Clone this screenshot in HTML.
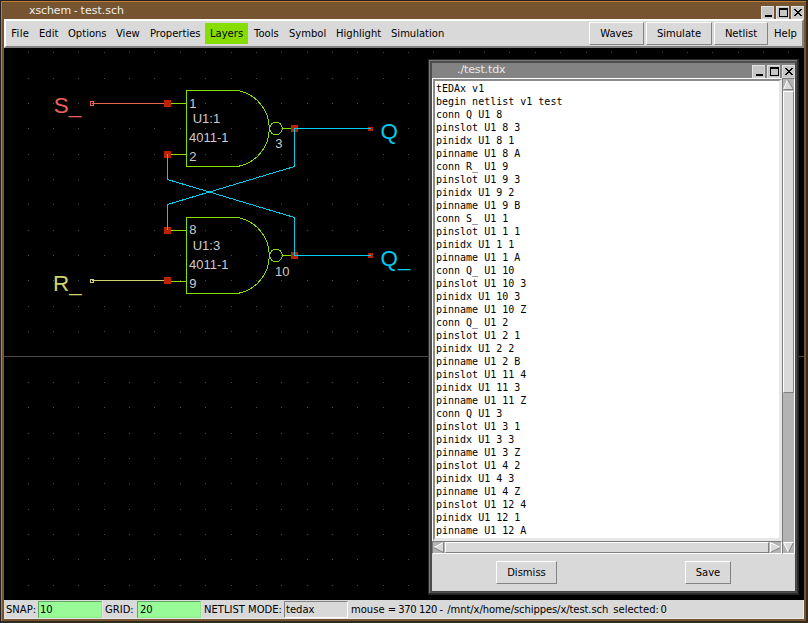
<!DOCTYPE html><html><head><meta charset="utf-8"><title>xschem - test.sch</title><style>
html,body{margin:0;padding:0}
body{width:808px;height:623px;position:relative;overflow:hidden;background:#765430;font-family:"DejaVu Sans","Liberation Sans",sans-serif;font-size:10px;color:#000}
div,span{position:absolute;box-sizing:border-box;white-space:pre}
.t{line-height:12px;height:12px}
.btn{background:#d9d9d9;border:1px solid;border-color:#fff #828282 #828282 #fff}
.wb{background:#c6c6c6;border:1px solid;border-color:#e2e2e2 #d4d4d4 #d4d4d4 #e2e2e2;width:13px;height:13px}
.mono{font-family:"DejaVu Sans Mono","Liberation Mono",monospace;font-size:10px}
</style></head><body>
<div style="left:0;top:0;width:808px;height:1px;background:#242220"></div>
<div style="left:0;top:0;width:1px;height:623px;background:#242220"></div>
<div style="left:1px;top:1px;width:805px;height:1px;background:#c07c32"></div>
<div style="left:1px;top:1px;width:1px;height:620px;background:#c07c32"></div>
<div style="left:806px;top:1px;width:2px;height:622px;background:#33291f"></div>
<div style="left:1px;top:621px;width:807px;height:2px;background:#33291f"></div>
<div class="t" style="left:29px;top:4px;color:#efefef;font-size:11px;line-height:13px;height:13px;letter-spacing:-0.1px">xschem </div>
<div class="t" style="left:73.8px;top:4px;color:#efefef;font-size:11px;line-height:13px;height:13px">- </div>
<div class="t" style="left:80.6px;top:4px;color:#efefef;font-size:11px;line-height:13px;height:13px">test.sch</div>
<div class="wb" style="left:761px;top:6px"><div style="left:3px;top:8px;width:7px;height:2px;background:#000"></div></div>
<div class="wb" style="left:776px;top:6px"><div style="left:2px;top:1px;width:9px;height:9px;border:1px solid #000;border-top-width:2px"></div></div>
<div class="wb" style="left:791px;top:6px"><svg width="11" height="11" style="position:absolute;left:0;top:0" shape-rendering="crispEdges"><path d="M2 2h2v1h1v1h2v-1h1v-1h2v1h-1v1h-1v1h-1v1h1v1h1v1h1v1h-2v-1h-1v-1h-2v1h-1v1h-2v-1h1v-1h1v-1h1v-1h-1v-1h-1v-1h-1z" fill="#000"/></svg></div>
<div style="left:4px;top:19px;width:800px;height:600px;background:#d9d9d9"></div>
<div style="left:4px;top:19px;width:800px;height:29px;background:#d9d9d9;border:2px solid;border-color:#fff #828282 #828282 #fff"></div>
<div style="left:205px;top:23px;width:43px;height:21px;background:#88dd00"></div>
<div class="t" style="left:11.3px;top:28px;letter-spacing:0.3px">File</div>
<div class="t" style="left:39px;top:28px">Edit</div>
<div class="t" style="left:68px;top:28px">Options</div>
<div class="t" style="left:116px;top:28px">View</div>
<div class="t" style="left:150px;top:28px">Properties</div>
<div class="t" style="left:210px;top:28px">Layers</div>
<div class="t" style="left:254px;top:28px">Tools</div>
<div class="t" style="left:289px;top:28px">Symbol</div>
<div class="t" style="left:336px;top:28px">Highlight</div>
<div class="t" style="left:391px;top:28px">Simulation</div>
<div class="btn" style="left:589px;top:22px;width:55px;height:23px;text-align:center;line-height:22px">Waves</div>
<div class="btn" style="left:646px;top:22px;width:66px;height:23px;text-align:center;line-height:22px">Simulate</div>
<div class="btn" style="left:714px;top:22px;width:54px;height:23px;text-align:center;line-height:22px">Netlist</div>
<div class="t" style="left:774px;top:28px">Help</div>
<div style="left:4px;top:48px;width:800px;height:552px;background:#000"></div>
<svg width="800" height="552" viewBox="4 48 800 552" style="position:absolute;left:4px;top:48px" shape-rendering="crispEdges"><path d="M28 52h1M28 78h1M28 103h1M28 128h1M28 154h1M28 179h1M28 204h1M28 230h1M28 255h1M28 280h1M28 306h1M28 331h1M28 382h1M28 407h1M28 433h1M28 458h1M28 483h1M28 509h1M28 534h1M28 559h1M28 585h1M53 52h1M53 78h1M53 103h1M53 128h1M53 154h1M53 179h1M53 204h1M53 230h1M53 255h1M53 280h1M53 306h1M53 331h1M53 382h1M53 407h1M53 433h1M53 458h1M53 483h1M53 509h1M53 534h1M53 559h1M53 585h1M78 52h1M78 78h1M78 103h1M78 128h1M78 154h1M78 179h1M78 204h1M78 230h1M78 255h1M78 280h1M78 306h1M78 331h1M78 382h1M78 407h1M78 433h1M78 458h1M78 483h1M78 509h1M78 534h1M78 559h1M78 585h1M104 52h1M104 78h1M104 103h1M104 128h1M104 154h1M104 179h1M104 204h1M104 230h1M104 255h1M104 280h1M104 306h1M104 331h1M104 382h1M104 407h1M104 433h1M104 458h1M104 483h1M104 509h1M104 534h1M104 559h1M104 585h1M129 52h1M129 78h1M129 103h1M129 128h1M129 154h1M129 179h1M129 204h1M129 230h1M129 255h1M129 280h1M129 306h1M129 331h1M129 382h1M129 407h1M129 433h1M129 458h1M129 483h1M129 509h1M129 534h1M129 559h1M129 585h1M154 52h1M154 78h1M154 103h1M154 128h1M154 154h1M154 179h1M154 204h1M154 230h1M154 255h1M154 280h1M154 306h1M154 331h1M154 382h1M154 407h1M154 433h1M154 458h1M154 483h1M154 509h1M154 534h1M154 559h1M154 585h1M180 52h1M180 78h1M180 103h1M180 128h1M180 154h1M180 179h1M180 204h1M180 230h1M180 255h1M180 280h1M180 306h1M180 331h1M180 382h1M180 407h1M180 433h1M180 458h1M180 483h1M180 509h1M180 534h1M180 559h1M180 585h1M205 52h1M205 78h1M205 103h1M205 128h1M205 154h1M205 179h1M205 204h1M205 230h1M205 255h1M205 280h1M205 306h1M205 331h1M205 382h1M205 407h1M205 433h1M205 458h1M205 483h1M205 509h1M205 534h1M205 559h1M205 585h1M231 52h1M231 78h1M231 103h1M231 128h1M231 154h1M231 179h1M231 204h1M231 230h1M231 255h1M231 280h1M231 306h1M231 331h1M231 382h1M231 407h1M231 433h1M231 458h1M231 483h1M231 509h1M231 534h1M231 559h1M231 585h1M256 52h1M256 78h1M256 103h1M256 128h1M256 154h1M256 179h1M256 204h1M256 230h1M256 255h1M256 280h1M256 306h1M256 331h1M256 382h1M256 407h1M256 433h1M256 458h1M256 483h1M256 509h1M256 534h1M256 559h1M256 585h1M281 52h1M281 78h1M281 103h1M281 128h1M281 154h1M281 179h1M281 204h1M281 230h1M281 255h1M281 280h1M281 306h1M281 331h1M281 382h1M281 407h1M281 433h1M281 458h1M281 483h1M281 509h1M281 534h1M281 559h1M281 585h1M307 52h1M307 78h1M307 103h1M307 128h1M307 154h1M307 179h1M307 204h1M307 230h1M307 255h1M307 280h1M307 306h1M307 331h1M307 382h1M307 407h1M307 433h1M307 458h1M307 483h1M307 509h1M307 534h1M307 559h1M307 585h1M332 52h1M332 78h1M332 103h1M332 128h1M332 154h1M332 179h1M332 204h1M332 230h1M332 255h1M332 280h1M332 306h1M332 331h1M332 382h1M332 407h1M332 433h1M332 458h1M332 483h1M332 509h1M332 534h1M332 559h1M332 585h1M357 52h1M357 78h1M357 103h1M357 128h1M357 154h1M357 179h1M357 204h1M357 230h1M357 255h1M357 280h1M357 306h1M357 331h1M357 382h1M357 407h1M357 433h1M357 458h1M357 483h1M357 509h1M357 534h1M357 559h1M357 585h1M383 52h1M383 78h1M383 103h1M383 128h1M383 154h1M383 179h1M383 204h1M383 230h1M383 255h1M383 280h1M383 306h1M383 331h1M383 382h1M383 407h1M383 433h1M383 458h1M383 483h1M383 509h1M383 534h1M383 559h1M383 585h1M408 52h1M408 78h1M408 103h1M408 128h1M408 154h1M408 179h1M408 204h1M408 230h1M408 255h1M408 280h1M408 306h1M408 331h1M408 382h1M408 407h1M408 433h1M408 458h1M408 483h1M408 509h1M408 534h1M408 559h1M408 585h1M433 52h1M433 78h1M433 103h1M433 128h1M433 154h1M433 179h1M433 204h1M433 230h1M433 255h1M433 280h1M433 306h1M433 331h1M433 382h1M433 407h1M433 433h1M433 458h1M433 483h1M433 509h1M433 534h1M433 559h1M433 585h1M459 52h1M459 78h1M459 103h1M459 128h1M459 154h1M459 179h1M459 204h1M459 230h1M459 255h1M459 280h1M459 306h1M459 331h1M459 382h1M459 407h1M459 433h1M459 458h1M459 483h1M459 509h1M459 534h1M459 559h1M459 585h1M484 52h1M484 78h1M484 103h1M484 128h1M484 154h1M484 179h1M484 204h1M484 230h1M484 255h1M484 280h1M484 306h1M484 331h1M484 382h1M484 407h1M484 433h1M484 458h1M484 483h1M484 509h1M484 534h1M484 559h1M484 585h1M509 52h1M509 78h1M509 103h1M509 128h1M509 154h1M509 179h1M509 204h1M509 230h1M509 255h1M509 280h1M509 306h1M509 331h1M509 382h1M509 407h1M509 433h1M509 458h1M509 483h1M509 509h1M509 534h1M509 559h1M509 585h1M535 52h1M535 78h1M535 103h1M535 128h1M535 154h1M535 179h1M535 204h1M535 230h1M535 255h1M535 280h1M535 306h1M535 331h1M535 382h1M535 407h1M535 433h1M535 458h1M535 483h1M535 509h1M535 534h1M535 559h1M535 585h1M560 52h1M560 78h1M560 103h1M560 128h1M560 154h1M560 179h1M560 204h1M560 230h1M560 255h1M560 280h1M560 306h1M560 331h1M560 382h1M560 407h1M560 433h1M560 458h1M560 483h1M560 509h1M560 534h1M560 559h1M560 585h1M586 52h1M586 78h1M586 103h1M586 128h1M586 154h1M586 179h1M586 204h1M586 230h1M586 255h1M586 280h1M586 306h1M586 331h1M586 382h1M586 407h1M586 433h1M586 458h1M586 483h1M586 509h1M586 534h1M586 559h1M586 585h1M611 52h1M611 78h1M611 103h1M611 128h1M611 154h1M611 179h1M611 204h1M611 230h1M611 255h1M611 280h1M611 306h1M611 331h1M611 382h1M611 407h1M611 433h1M611 458h1M611 483h1M611 509h1M611 534h1M611 559h1M611 585h1M636 52h1M636 78h1M636 103h1M636 128h1M636 154h1M636 179h1M636 204h1M636 230h1M636 255h1M636 280h1M636 306h1M636 331h1M636 382h1M636 407h1M636 433h1M636 458h1M636 483h1M636 509h1M636 534h1M636 559h1M636 585h1M662 52h1M662 78h1M662 103h1M662 128h1M662 154h1M662 179h1M662 204h1M662 230h1M662 255h1M662 280h1M662 306h1M662 331h1M662 382h1M662 407h1M662 433h1M662 458h1M662 483h1M662 509h1M662 534h1M662 559h1M662 585h1M687 52h1M687 78h1M687 103h1M687 128h1M687 154h1M687 179h1M687 204h1M687 230h1M687 255h1M687 280h1M687 306h1M687 331h1M687 382h1M687 407h1M687 433h1M687 458h1M687 483h1M687 509h1M687 534h1M687 559h1M687 585h1M712 52h1M712 78h1M712 103h1M712 128h1M712 154h1M712 179h1M712 204h1M712 230h1M712 255h1M712 280h1M712 306h1M712 331h1M712 382h1M712 407h1M712 433h1M712 458h1M712 483h1M712 509h1M712 534h1M712 559h1M712 585h1M738 52h1M738 78h1M738 103h1M738 128h1M738 154h1M738 179h1M738 204h1M738 230h1M738 255h1M738 280h1M738 306h1M738 331h1M738 382h1M738 407h1M738 433h1M738 458h1M738 483h1M738 509h1M738 534h1M738 559h1M738 585h1M763 52h1M763 78h1M763 103h1M763 128h1M763 154h1M763 179h1M763 204h1M763 230h1M763 255h1M763 280h1M763 306h1M763 331h1M763 382h1M763 407h1M763 433h1M763 458h1M763 483h1M763 509h1M763 534h1M763 559h1M763 585h1M788 52h1M788 78h1M788 103h1M788 128h1M788 154h1M788 179h1M788 204h1M788 230h1M788 255h1M788 280h1M788 306h1M788 331h1M788 382h1M788 407h1M788 433h1M788 458h1M788 483h1M788 509h1M788 534h1M788 559h1M788 585h1" stroke="#4a4a4a" stroke-width="1" transform="translate(0,0.5)"/><path d="M4 356.5H804" stroke="#4a4a4a" stroke-width="1"/><path d="M237.5 90.5 H186.5 V166.5 H237.5 M237.5 90.5 A38.6 38.6 0 0 1 237.5 166.5" stroke="#88dd00" fill="none"/><circle cx="276" cy="128.5" r="6.3" stroke="#88dd00" fill="none"/><path d="M282 128.5 H294 M167 103.5 H186 M167 154.5 H186" stroke="#88dd00" fill="none"/><path d="M237.5 217.5 H186.5 V293.5 H237.5 M237.5 217.5 A38.6 38.6 0 0 1 237.5 293.5" stroke="#88dd00" fill="none"/><circle cx="276" cy="255.5" r="6.3" stroke="#88dd00" fill="none"/><path d="M282 255.5 H294 M167 230.5 H186 M167 281.5 H186" stroke="#88dd00" fill="none"/><path d="M92 103.5H167" stroke="#ef6158" fill="none"/><rect x="90.5" y="101.5" width="3" height="4" stroke="#ef6158" fill="none"/><path d="M92 280.5H167" stroke="#d2d46b" fill="none"/><rect x="90.5" y="279.5" width="3" height="3" stroke="#d2d46b" fill="none"/><rect x="164" y="100" width="7" height="7" fill="#bb2200"/><rect x="164" y="151" width="7" height="7" fill="#bb2200"/><rect x="291" y="125" width="7" height="7" fill="#bb2200"/><rect x="164" y="227" width="7" height="7" fill="#bb2200"/><rect x="164" y="277" width="7" height="7" fill="#bb2200"/><rect x="291" y="252" width="7" height="7" fill="#bb2200"/><rect x="368" y="127" width="5" height="4" fill="#bb2200"/><rect x="368" y="253" width="5" height="5" fill="#bb2200"/><path d="M167.5 154V179.5L294.5 217.5V255.5H371" stroke="#00ccee" fill="none"/><path d="M371 128.5H294.5V166.5L167.5 204.5V230" stroke="#00ccee" fill="none"/></svg>
<svg width="800" height="552" viewBox="4 48 800 552" style="position:absolute;left:4px;top:48px;font-family:'Liberation Sans',sans-serif"><text x="189.3" y="108" font-size="13" fill="#cccccc">1</text><text x="192.7" y="123" font-size="13" fill="#cccccc">U1:1</text><text x="189" y="142" font-size="13" fill="#cccccc">4011-1</text><text x="189.3" y="160.8" font-size="13" fill="#cccccc">2</text><text x="275.3" y="148.3" font-size="13" fill="#cccccc">3</text><text x="189.3" y="233.6" font-size="13" fill="#cccccc">8</text><text x="192.7" y="250" font-size="13" fill="#cccccc">U1:3</text><text x="189" y="268.8" font-size="13" fill="#cccccc">4011-1</text><text x="189.3" y="287.5" font-size="13" fill="#cccccc">9</text><text x="275" y="275.7" font-size="13" fill="#cccccc">10</text><text x="53.8" y="112.7" font-size="22.4" fill="#ef6158">S_</text><text x="53" y="290.8" font-size="22.4" fill="#d2d46b">R_</text><text x="380.5" y="139.2" font-size="22.4" fill="#00ccee">Q</text><text x="380.5" y="266.1" font-size="22.4" fill="#00ccee">Q_</text></svg>
<div style="left:4px;top:600px;width:800px;height:19px;background:#d9d9d9;border-right:1px solid #e8e8e8;border-bottom:1px solid #e8e8e8"></div>
<div class="t" style="left:6px;top:604px">SNAP:</div>
<div style="left:38px;top:601px;width:64px;height:17px;background:#98fb98;border:1px solid;border-color:#5fa85f #8aea8a #8aea8a #5fa85f;box-shadow:1px 0 0 #e4e4e4"></div>
<div class="t" style="left:40px;top:604px">10</div>
<div class="t" style="left:105px;top:604px">GRID:</div>
<div style="left:137px;top:601px;width:64px;height:17px;background:#98fb98;border:1px solid;border-color:#5fa85f #8aea8a #8aea8a #5fa85f;box-shadow:1px 0 0 #e4e4e4"></div>
<div class="t" style="left:140px;top:604px">20</div>
<div class="t" style="left:204px;top:604px">NETLIST MODE:</div>
<div style="left:284px;top:601px;width:64px;height:17px;background:#d9d9d9;border:1px solid;border-color:#828282 #fff #fff #828282"></div>
<div class="t" style="left:286px;top:604px">tedax</div>
<div class="t" style="left:351px;top:604px">mouse = </div>
<div class="t" style="left:398.3px;top:604px;letter-spacing:-0.4px">370 </div>
<div class="t" style="left:419px;top:604px;letter-spacing:-0.4px">120 </div>
<div class="t" style="left:439.6px;top:604px">- </div>
<div class="t" style="left:447.3px;top:604px;letter-spacing:-0.09px">/mnt/x/home/schippes/x/test.sch  </div>
<div class="t" style="left:613.3px;top:604px">selected: </div>
<div class="t" style="left:660.4px;top:604px">0</div>
<div style="left:428px;top:59px;width:371px;height:536px;background:#222"></div>
<div style="left:428px;top:59px;width:370px;height:535px;background:#2b2b2b"></div>
<div style="left:429px;top:60px;width:368px;height:533px;background:#7a7a7a"></div>
<div style="left:430px;top:61px;width:367px;height:532px;background:#4d4d4d"></div>
<div style="left:797px;top:60px;width:1px;height:534px;background:#2b2b2b"></div>
<div style="left:429px;top:593px;width:369px;height:1px;background:#2b2b2b"></div>
<div style="left:795px;top:63px;width:1px;height:529px;background:#444"></div>
<div style="left:432px;top:591px;width:364px;height:1px;background:#444"></div>
<div style="left:432px;top:63px;width:363px;height:15px;background:#838383"></div>
<div class="t" style="left:457px;top:63px;color:#eaeaea;font-size:11px;line-height:13px;height:13px;letter-spacing:-0.12px">./test.tdx</div>
<div class="wb" style="left:752px;top:65px"><div style="left:3px;top:8px;width:7px;height:2px;background:#000"></div></div>
<div class="wb" style="left:767px;top:65px"><div style="left:2px;top:1px;width:9px;height:9px;border:1px solid #000;border-top-width:2px"></div></div>
<div class="wb" style="left:782px;top:65px"><svg width="11" height="11" style="position:absolute;left:0;top:0" shape-rendering="crispEdges"><path d="M2 2h2v1h1v1h2v-1h1v-1h2v1h-1v1h-1v1h-1v1h1v1h1v1h1v1h-2v-1h-1v-1h-2v1h-1v1h-2v-1h1v-1h1v-1h1v-1h-1v-1h-1v-1h-1z" fill="#000"/></svg></div>
<div style="left:432px;top:78px;width:363px;height:513px;background:#d9d9d9"></div>
<div style="left:432px;top:78px;width:350px;height:463px;background:#fff;border:solid;border-width:1px 0 0 1px;border-color:#fff"></div>
<div style="left:433px;top:79px;width:349px;height:462px;background:#fff;border:solid;border-width:2px 3px 3px 2px;border-color:#8a8a8a #e8e8e8 #e8e8e8 #8a8a8a"></div>
<div class="mono" style="left:436px;top:82px;line-height:13px;color:#000">tEDAx v1
begin netlist v1 test
conn Q U1 8
pinslot U1 8 3
pinidx U1 8 1
pinname U1 8 A
conn R_ U1 9
pinslot U1 9 3
pinidx U1 9 2
pinname U1 9 B
conn S_ U1 1
pinslot U1 1 1
pinidx U1 1 1
pinname U1 1 A
conn Q_ U1 10
pinslot U1 10 3
pinidx U1 10 3
pinname U1 10 Z
conn Q_ U1 2
pinslot U1 2 1
pinidx U1 2 2
pinname U1 2 B
pinslot U1 11 4
pinidx U1 11 3
pinname U1 11 Z
conn Q U1 3
pinslot U1 3 1
pinidx U1 3 3
pinname U1 3 Z
pinslot U1 4 2
pinidx U1 4 3
pinname U1 4 Z
pinslot U1 12 4
pinidx U1 12 1
pinname U1 12 A</div>
<div style="left:782px;top:78px;width:13px;height:476px;background:#b3b3b3;border:1px solid;border-color:#7a7a7a #fff #fff #7a7a7a"></div>
<svg width="13" height="476" style="position:absolute;left:782px;top:78px"><path d="M5.5 1.5L1.5 11.5H11.5Z" fill="#d9d9d9"/><path d="M5.5 1.5L1.5 11.5" stroke="#fff" fill="none"/><path d="M5.5 1.5L11.5 11.5H1.5" stroke="#828282" fill="none"/><path d="M1.5 464.5H11.5L6.5 474.5Z" fill="#d9d9d9"/><path d="M6.5 474.5L1.5 464.5H11.5" stroke="#fff" fill="none"/><path d="M11.5 464.5L6.5 474.5" stroke="#828282" fill="none"/></svg>
<div style="left:783px;top:91px;width:11px;height:302px;background:#d9d9d9;border:1px solid;border-color:#fff #828282 #828282 #fff"></div>
<div style="left:432px;top:541px;width:350px;height:13px;background:#b3b3b3;border:1px solid;border-color:#7a7a7a #fff #fff #7a7a7a"></div>
<svg width="350" height="13" style="position:absolute;left:432px;top:541px"><path d="M1.5 6.5L11.5 1.5V11.5Z" fill="#d9d9d9"/><path d="M1.5 6.5L11.5 1.5" stroke="#fff" fill="none"/><path d="M11.5 1.5V11.5L1.5 6.5" stroke="#828282" fill="none"/><path d="M338.5 1.5L348.5 6.5L338.5 11.5Z" fill="#d9d9d9"/><path d="M338.5 11.5V1.5L348.5 6.5" stroke="#fff" fill="none"/><path d="M348.5 6.5L338.5 11.5" stroke="#828282" fill="none"/></svg>
<div style="left:445px;top:542px;width:324px;height:11px;background:#d9d9d9;border:1px solid;border-color:#fff #828282 #828282 #fff"></div>
<div class="btn" style="left:496px;top:561px;width:61px;height:23px;text-align:center;line-height:22px">Dismiss</div>
<div class="btn" style="left:685px;top:561px;width:46px;height:23px;text-align:center;line-height:22px">Save</div>
</body></html>
